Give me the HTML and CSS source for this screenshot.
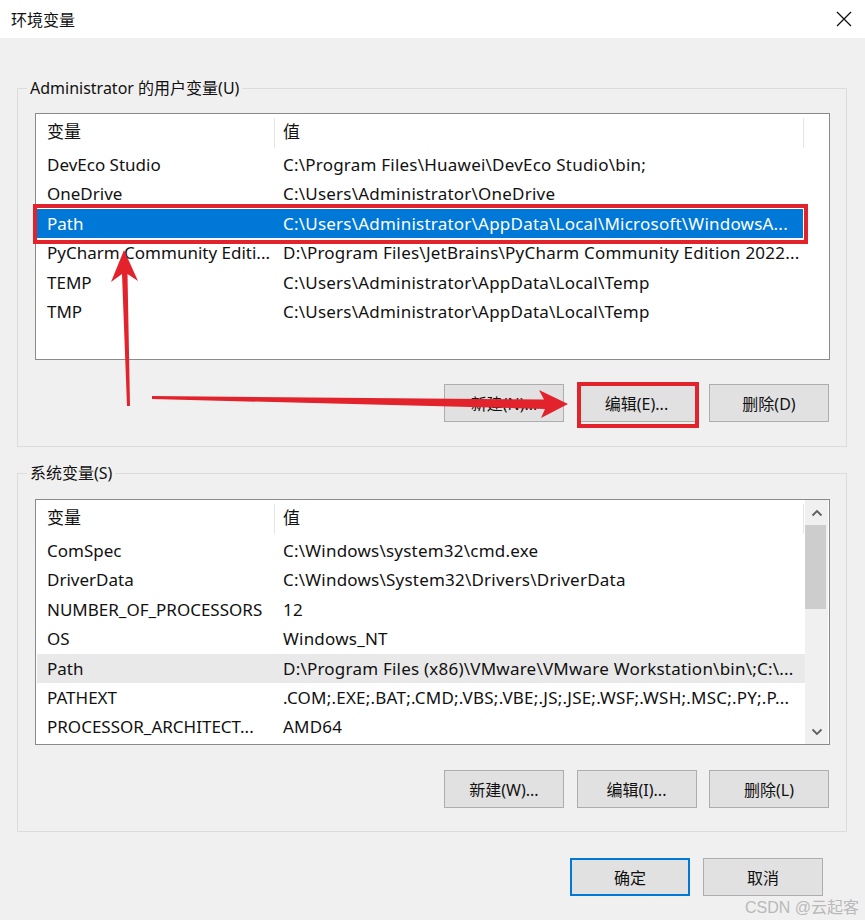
FILE: index.html
```html
<!DOCTYPE html>
<html lang="zh-CN">
<head>
<meta charset="utf-8">
<title>环境变量</title>
<link rel="stylesheet" href="styles.css">
</head>
<body>
<div class="window">
  <header class="titlebar">
    <span class="title">环境变量</span>
    <span class="close" aria-label="关闭">
      <svg width="16" height="16" viewBox="0 0 16 16"><path d="M1 1 L15 15 M15 1 L1 15" stroke="#111" stroke-width="1.3" fill="none"/></svg>
    </span>
  </header>

  <main class="content">
    <fieldset class="group group-user">
      <legend>Administrator 的用户变量(U)</legend>
      <div class="list">
        <div class="row head"><div class="c1">变量</div><div class="c2">值</div><div class="c3"></div></div>
        <div class="row"><div class="c1">DevEco Studio</div><div class="c2">C:\Program Files\Huawei\DevEco Studio\bin;</div></div>
        <div class="row"><div class="c1">OneDrive</div><div class="c2">C:\Users\Administrator\OneDrive</div></div>
        <div class="row selected"><div class="c1">Path</div><div class="c2">C:\Users\Administrator\AppData\Local\Microsoft\WindowsA...</div></div>
        <div class="row"><div class="c1">PyCharm Community Editi...</div><div class="c2">D:\Program Files\JetBrains\PyCharm Community Edition 2022...</div></div>
        <div class="row"><div class="c1">TEMP</div><div class="c2">C:\Users\Administrator\AppData\Local\Temp</div></div>
        <div class="row"><div class="c1">TMP</div><div class="c2">C:\Users\Administrator\AppData\Local\Temp</div></div>
      </div>
      <div class="btns">
        <button class="btn">新建(N)...</button>
        <button class="btn">编辑(E)...</button>
        <button class="btn">删除(D)</button>
      </div>
    </fieldset>

    <fieldset class="group group-sys">
      <legend>系统变量(S)</legend>
      <div class="list list-scroll">
        <div class="rows">
          <div class="row head"><div class="c1">变量</div><div class="c2">值</div></div>
          <div class="row"><div class="c1">ComSpec</div><div class="c2">C:\Windows\system32\cmd.exe</div></div>
          <div class="row"><div class="c1">DriverData</div><div class="c2">C:\Windows\System32\Drivers\DriverData</div></div>
          <div class="row"><div class="c1">NUMBER_OF_PROCESSORS</div><div class="c2">12</div></div>
          <div class="row"><div class="c1">OS</div><div class="c2">Windows_NT</div></div>
          <div class="row hover"><div class="c1">Path</div><div class="c2">D:\Program Files (x86)\VMware\VMware Workstation\bin\;C:\...</div></div>
          <div class="row"><div class="c1">PATHEXT</div><div class="c2">.COM;.EXE;.BAT;.CMD;.VBS;.VBE;.JS;.JSE;.WSF;.WSH;.MSC;.PY;.P...</div></div>
          <div class="row"><div class="c1">PROCESSOR_ARCHITECT...</div><div class="c2">AMD64</div></div>
        </div>
        <div class="scrollbar">
          <div class="sb-arrow">
            <svg width="12" height="8" viewBox="0 0 12 8"><path d="M1.5 6.5 L6 2 L10.5 6.5" stroke="#606060" stroke-width="1.8" fill="none"/></svg>
          </div>
          <div class="sb-track"><div class="sb-thumb"></div></div>
          <div class="sb-arrow">
            <svg width="12" height="8" viewBox="0 0 12 8"><path d="M1.5 1.5 L6 6 L10.5 1.5" stroke="#606060" stroke-width="1.8" fill="none"/></svg>
          </div>
        </div>
      </div>
      <div class="btns btns-sys">
        <button class="btn">新建(W)...</button>
        <button class="btn">编辑(I)...</button>
        <button class="btn">删除(L)</button>
      </div>
    </fieldset>

    <div class="footer">
      <button class="btn btn-default">确定</button>
      <button class="btn">取消</button>
    </div>
  </main>

  <svg class="annot" width="865" height="920" viewBox="0 0 865 920">
    <rect x="35" y="206" width="771" height="36" fill="none" stroke="#e3232c" stroke-width="4"/>
    <rect x="579" y="384" width="118" height="42" fill="none" stroke="#e3232c" stroke-width="4"/>
    <polygon points="124,250 138,281 127.5,274 130,406 127,406 122,274 111,282" fill="#e3232c"/>
    <polygon points="152,396 544,399.5 539,390 568,404 541,418 545,409 152,399" fill="#e3232c"/>
  </svg>

  <div class="watermark">CSDN @云起客</div>
</div>
</body>
</html>
```

FILE: styles.css
```css
* { box-sizing: border-box; }

html, body {
  margin: 0;
  padding: 0;
  background: #f0f0f0;
}

body {
  font-family: "Noto Sans", "Noto Sans CJK SC", sans-serif;
  font-size: 17px;
  color: #111;
}

.window {
  position: relative;
  width: 865px;
  height: 920px;
  overflow: hidden;
  background: #f0f0f0;
}

.titlebar {
  height: 38px;
  background: #fff;
  display: flex;
  align-items: center;
  justify-content: space-between;
  padding: 0 13px 0 11px;
}

.title {
  font-family: "Noto Sans CJK SC", sans-serif;
  font-size: 16px;
  line-height: 20px;
}

.close {
  display: flex;
  width: 16px;
  height: 16px;
}

.content {
  padding: 39px 18px 0 17px;
}

.group {
  margin: 0;
  border: 1px solid #dcdcdc;
  padding: 14px 16px 24px 17px;
  min-width: 0;
}

.group legend {
  padding: 0 3px;
  margin-left: -8px;
  font-size: 16px;
  line-height: 22px;
  height: 22px;
}

.group-sys {
  margin-top: 15px;
  padding-top: 15px;
  padding-bottom: 23px;
}

.list {
  height: 247px;
  background: #fff;
  border: 1px solid #8a8a8a;
  padding: 0 1px;
}

.list-scroll {
  height: 246px;
  display: flex;
  padding: 0 0 0 1px;
}

.rows {
  flex: 1;
  min-width: 0;
}

.row {
  display: flex;
  height: 29.4px;
  line-height: 29.4px;
  white-space: nowrap;
}

.row.head {
  height: 36px;
  line-height: 36px;
}

.c1 {
  width: 237px;
  flex: none;
  padding-left: 10px;
  overflow: hidden;
}

.c2 {
  width: 530px;
  flex: none;
  padding-left: 9px;
  overflow: hidden;
  letter-spacing: 0.22px;
}

.head .c2 {
  border-left: 1px solid #e5e5e5;
  height: 30px;
  margin-top: 4px;
  line-height: 28px;
  border-right: 1px solid #e5e5e5;
  padding-left: 8px;
  letter-spacing: 0;
}

.head .c1 { line-height: 36px; }

.row.selected {
  background: #0078d7;
  color: #fff;
  width: 766px;
}

.row.hover {
  background: #e9e9e9;
  width: 768px;
}

.scrollbar {
  width: 23px;
  flex: none;
  margin-left: 1px;
  margin-right: 1px;
  background: #f0f0f0;
  display: flex;
  flex-direction: column;
}

.sb-arrow {
  height: 25px;
  display: flex;
  align-items: center;
  justify-content: center;
  flex: none;
}

.sb-track {
  flex: 1;
  padding: 0 2px 0 0;
}

.sb-thumb {
  height: 84px;
  background: #cdcdcd;
}

.btns {
  display: flex;
  justify-content: flex-end;
  gap: 12.5px;
  margin-top: 24px;
  padding-right: 1px;
}

.btns-sys {
  margin-top: 25px;
}

.btn {
  width: 120px;
  height: 38px;
  background: #e1e1e1;
  border: 1px solid #adadad;
  font-family: "Noto Sans", "Noto Sans CJK SC", sans-serif;
  font-size: 16px;
  color: #111;
  padding: 0;
  margin: 0;
}

.footer {
  display: flex;
  justify-content: flex-end;
  gap: 13px;
  margin-top: 26px;
  padding-right: 24px;
}

.btn-default {
  border: 2px solid #0078d7;
}

.annot {
  position: absolute;
  left: 0;
  top: 0;
  pointer-events: none;
}

.watermark {
  position: absolute;
  left: 745px;
  top: 894px;
  font-family: "Liberation Sans", "Noto Sans CJK SC", sans-serif;
  font-size: 16px;
  color: #b9b9b9;
  white-space: nowrap;
}
```
